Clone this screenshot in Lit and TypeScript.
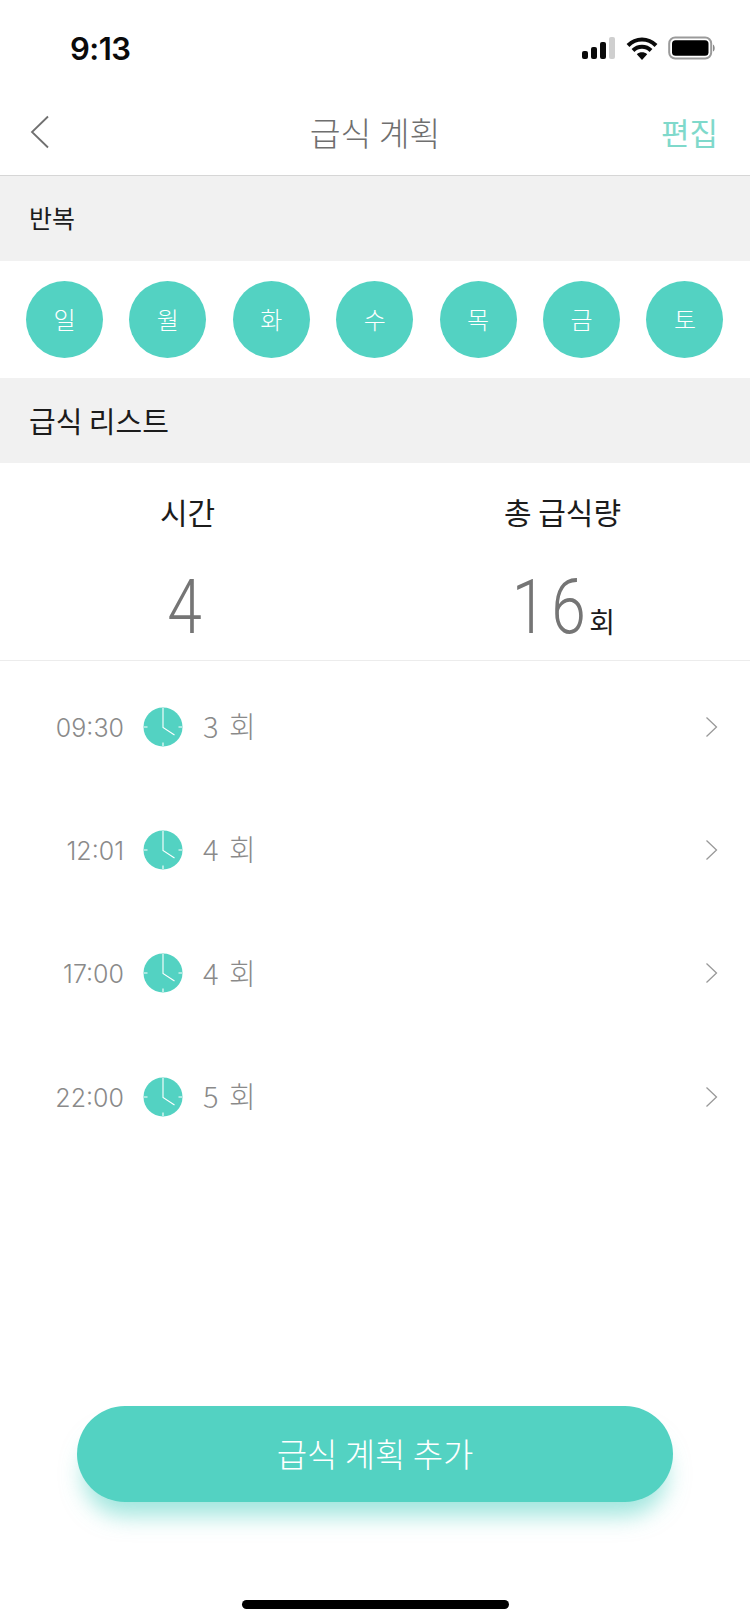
import { LitElement, html, css, svg } from "lit";
import { customElement } from "lit/decorators.js";

const DAYS = ["일", "월", "화", "수", "목", "금", "토"];
const ROWS = [
  { time: "09:30", count: 3 },
  { time: "12:01", count: 4 },
  { time: "17:00", count: 4 },
  { time: "22:00", count: 5 },
];

const clock = svg`<svg class="clock" viewBox="0 0 40 40">
  <circle cx="20" cy="20" r="19.5" fill="#53d2c2"/>
  <path d="M20 1v19.500l11.500 7.500M20 35.500V39M1 20h3.500M35.500 20H39" fill="none" stroke="#fff" stroke-width="1.100"/>
</svg>`;

@customElement("app-root")
export class AppRoot extends LitElement {
  static styles = css`
    :host {
      display: flex;
      flex-direction: column;
      width: 750px;
      height: 1624px;
      background: #fff;
      overflow: hidden;
      font-family: "Noto Sans CJK KR", "Noto Sans", sans-serif;
      font-weight: 300;
      color: #1c1c1c;
    }
    .status {
      height: 96px;
      flex: none;
      display: flex;
      align-items: center;
      justify-content: space-between;
      padding: 0 34px 0 70px;
      box-sizing: border-box;
    }
    .time {
      font: 600 31px/1 Inter, "Liberation Sans", sans-serif;
      color: #0a0a0a;
      letter-spacing: -0.5px;
    }
    .status-icons {
      display: flex;
      align-items: center;
      gap: 10px;
    }
    .nav {
      height: 71px;
      flex: none;
      display: grid;
      grid-template-columns: 1fr auto 1fr;
      align-items: center;
      padding: 0 32px 8px 30px;
      border-bottom: 1px solid #d6d6d6;
      box-sizing: content-box;
    }
    .back { display: block; }
    .title {
      font-size: 33.5px;
      color: #6f6f6f;
      line-height: 1;
      margin-left: 2px;
    }
    .edit {
      justify-self: end;
      font-size: 31px;
      font-weight: 400;
      color: #7fd9cb;
      line-height: 1;
    }
    .band {
      height: 85px;
      flex: none;
      display: flex;
      align-items: center;
      background: #f1f1f1;
      padding: 0 29px;
      line-height: 1;
      font-weight: 400;
    }
    .band.small { font-size: 25px; padding-bottom: 2px; height: 83px; }
    .band.large { font-size: 29px; }
    .days {
      height: 117px;
      flex: none;
      display: flex;
      align-items: center;
      justify-content: space-between;
      padding: 0 26.500px 0 26px;
    }
    .day {
      width: 77px;
      height: 75px;
      padding-bottom: 2px;
      border-radius: 50%;
      background: #53d2c2;
      color: #fff;
      font-size: 24px;
      display: flex;
      align-items: center;
      justify-content: center;
    }
    .summary {
      height: 198px;
      flex: none;
      display: grid;
      grid-template-columns: 1fr 1fr;
      border-bottom: 1px solid #ececec;
      box-sizing: border-box;
    }
    .col {
      display: flex;
      flex-direction: column;
      align-items: center;
    }
    .label {
      margin-top: 28px;
      font-size: 30px;
      line-height: 40px;
      font-weight: 400;
    }
    .value {
      margin-top: 31px;
      display: flex;
      align-items: baseline;
      line-height: 90px;
    }
    .num {
      font-family: Roboto, sans-serif;
      font-weight: 300;
      font-size: 76px;
      letter-spacing: 6px;
      color: #757575;
      margin: 0 -7px;
      transform: scaleX(0.82);
    }
    .unit {
      font-size: 28px;
      font-weight: 400;
      margin-left: -3px;
    }
    .rows {
      flex: none;
      padding-top: 4px;
    }
    .row {
      height: 123.300px;
      display: grid;
      grid-template-columns: 124px 79px 1fr auto;
      align-items: center;
      padding-right: 32px;
      color: #8a8a8a;
    }
    .row-time {
      text-align: right;
      font: 300 25px/1 Inter, Roboto, sans-serif;
      color: #8a8a8a;
      padding-top: 3px;
    }
    .clock {
      display: block;
      width: 40px;
      height: 40px;
      justify-self: center;
      margin-right: 2px;
    }
    .count {
      font-size: 29px;
      line-height: 1;
      word-spacing: 4px;
      padding-bottom: 2px;
    }
    .spacer { flex: 1; }
    .cta {
      flex: none;
      margin: 0 77px;
      height: 96px;
      padding-bottom: 2px;
      box-sizing: border-box;
      border-radius: 48px;
      background: #53d2c2;
      box-shadow: 0 20px 22px -6px rgba(83, 210, 194, 0.55);
      color: #fff;
      font-size: 33px;
      display: flex;
      align-items: center;
      justify-content: center;
    }
    .home-wrap {
      flex: none;
      height: 122px;
      display: flex;
      justify-content: center;
      align-items: flex-end;
      padding-bottom: 15px;
      box-sizing: border-box;
    }
    .home {
      width: 267px;
      height: 9px;
      border-radius: 5px;
      background: #000;
    }
  `;

  render() {
    return html`
      <div class="status">
        <span class="time">9:13</span>
        <div class="status-icons">
          <svg width="34" height="24" viewBox="0 0 34 24">
            <rect x="0" y="15" width="6" height="8" rx="2" fill="#0a0a0a"/>
            <rect x="9" y="11" width="6" height="12" rx="2" fill="#0a0a0a"/>
            <rect x="18" y="6" width="6" height="17" rx="2" fill="#0a0a0a"/>
            <rect x="27" y="1" width="6" height="22" rx="2" fill="#cfcfcf"/>
          </svg>
          <svg width="32" height="24" viewBox="0 0 32 24">
            <path d="M2 9.500C10 1.500 22 1.500 30 9.500M7 14.500c5-5 13-5 18 0" fill="none" stroke="#0a0a0a" stroke-width="4"/>
            <path d="M10.800 18.200c3-2.600 7.400-2.600 10.400 0L16 24z" fill="#0a0a0a"/>
          </svg>
          <svg width="48" height="24" viewBox="0 0 48 24">
            <rect x="1.200" y="1.500" width="42" height="21" rx="6" fill="none" stroke="#9a9a9a" stroke-width="2"/>
            <rect x="4" y="4.200" width="36.500" height="15.600" rx="3.500" fill="#000"/>
            <path d="M45 8.500c2 .5 2.500 6.500 0 7z" fill="#8a8a8a"/>
          </svg>
        </div>
      </div>
      <div class="nav">
        <svg class="back" width="20" height="34" viewBox="0 0 20 34">
          <path d="M18 1.500 2 17l16 15.500" fill="none" stroke="#707070" stroke-width="1.800"/>
        </svg>
        <span class="title">급식 계획</span>
        <span class="edit">편집</span>
      </div>
      <div class="band small">반복</div>
      <div class="days">
        ${DAYS.map((d) => html`<div class="day">${d}</div>`)}
      </div>
      <div class="band large">급식 리스트</div>
      <div class="summary">
        <div class="col">
          <span class="label">시간</span>
          <div class="value"><span class="num">4</span></div>
        </div>
        <div class="col">
          <span class="label">총 급식량</span>
          <div class="value"><span class="num">16</span><span class="unit">회</span></div>
        </div>
      </div>
      <div class="rows">
        ${ROWS.map(
          (r) => html`<div class="row">
            <span class="row-time">${r.time}</span>
            ${clock}
            <span class="count">${r.count} 회</span>
            <svg width="13" height="22" viewBox="0 0 13 22">
              <path d="M1.500 1.500 11.500 11l-10 9.500" fill="none" stroke="#999" stroke-width="1.300"/>
            </svg>
          </div>`
        )}
      </div>
      <div class="spacer"></div>
      <div class="cta">급식 계획 추가</div>
      <div class="home-wrap"><div class="home"></div></div>
    `;
  }
}
